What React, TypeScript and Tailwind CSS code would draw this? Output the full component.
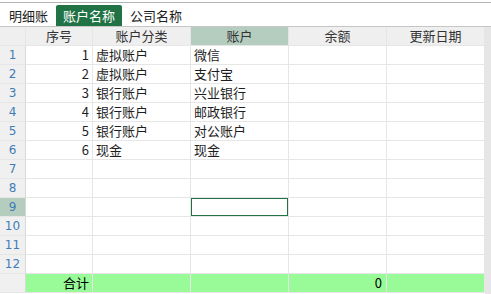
import React from "react";

const rows = [
  { no: "1", type: "虚拟账户", acct: "微信" },
  { no: "2", type: "虚拟账户", acct: "支付宝" },
  { no: "3", type: "银行账户", acct: "兴业银行" },
  { no: "4", type: "银行账户", acct: "邮政银行" },
  { no: "5", type: "银行账户", acct: "对公账户" },
  { no: "6", type: "现金", acct: "现金" },
  { no: "", type: "", acct: "" },
  { no: "", type: "", acct: "" },
  { no: "", type: "", acct: "" },
  { no: "", type: "", acct: "" },
  { no: "", type: "", acct: "" },
  { no: "", type: "", acct: "" },
];

const cell = "h-[19px] shrink-0 border-r border-b border-[#e6e6e6] flex items-center";

export default function App() {
  return (
    <div
      className="w-[491px] h-[294px] bg-white overflow-hidden text-[13px] text-[#1e1e1e] flex flex-col"
      style={{ fontFamily: '"Noto Sans CJK SC", "Noto Sans", sans-serif' }}
    >
      {/* Tab strip */}
      <div className="mt-[2px] border-t border-[#b4b4b4] h-[25px] shrink-0 border-b border-b-[#c6c6c6] flex items-end pl-[2px] gap-[1px]">
        <div className="h-[21px] px-[7px] flex items-center leading-none">明细账</div>
        <div className="h-[21px] px-[7px] flex items-center leading-none bg-[#217346] text-white rounded-t-[2px]">
          账户名称
        </div>
        <div className="h-[21px] px-[7px] flex items-center leading-none">公司名称</div>
      </div>

      <div className="flex flex-1">
        <div className="w-[485px]">
          {/* Header */}
          <div className="flex bg-[#efefef] text-[#333]">
            <div className={`${cell} w-[26px] border-[#dcdcdc]`} />
            <div className={`${cell} w-[67px] justify-center`}>序号</div>
            <div className={`${cell} w-[98px] justify-center`}>账户分类</div>
            <div className={`${cell} w-[98px] justify-center bg-[#b5cdbe]`}>账户</div>
            <div className={`${cell} w-[98px] justify-center`}>余额</div>
            <div className={`${cell} w-[98px] justify-center`}>更新日期</div>
          </div>

          {rows.map((r, i) => (
            <div key={i} className="flex">
              <div
                className={`${cell} w-[26px] justify-center border-r-[#d8d8d8] text-[12px] text-[#3f7cb8] ${
                  i === 8 ? "bg-[#b5cdbe]" : "bg-[#f0f0f0]"
                }`}
                style={{ fontFamily: '"DejaVu Sans", sans-serif' }}
              >
                {i + 1}
              </div>
              <div className={`${cell} w-[67px] justify-end pr-[3px]`}>{r.no}</div>
              <div className={`${cell} w-[98px] pl-[3px]`}>{r.type}</div>
              <div className={`${cell} w-[98px] pl-[3px] relative`}>
                {r.acct}
                {i === 8 && (
                  <div className="absolute left-0 top-0 w-[97px] h-[18px] border border-[#217346]" />
                )}
              </div>
              <div className={`${cell} w-[98px]`} />
              <div className={`${cell} w-[98px]`} />
            </div>
          ))}

          {/* Total row */}
          <div className="flex">
            <div className={`${cell} w-[26px] bg-[#f0f0f0] border-r-[#d8d8d8]`} />
            <div className={`${cell} w-[67px] justify-end pr-[3px] bg-[#98fb98] text-black`}>合计</div>
            <div className={`${cell} w-[98px] bg-[#98fb98]`} />
            <div className={`${cell} w-[98px] bg-[#98fb98]`} />
            <div className={`${cell} w-[98px] justify-end pr-[4px] bg-[#98fb98] text-black`}>0</div>
            <div className={`${cell} w-[98px] bg-[#98fb98]`} />
          </div>
        </div>
        <div className="w-[6px] bg-[#e6e6e6]" />
      </div>
    </div>
  );
}
